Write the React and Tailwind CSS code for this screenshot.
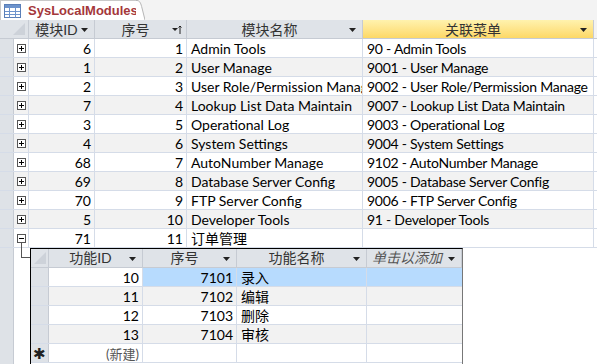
import React from 'react';

const FONT = { fontFamily: 'Lato, "Noto Sans CJK SC", sans-serif' };

const rows = [
  [6, 1, 'Admin Tools', '90 - Admin Tools'],
  [1, 2, 'User Manage', '9001 - User Manage'],
  [2, 3, 'User Role/Permission Manage', '9002 - User Role/Permission Manage'],
  [7, 4, 'Lookup List Data Maintain', '9007 - Lookup List Data Maintain'],
  [3, 5, 'Operational Log', '9003 - Operational Log'],
  [4, 6, 'System Settings', '9004 - System Settings'],
  [68, 7, 'AutoNumber Manage', '9102 - AutoNumber Manage'],
  [69, 8, 'Database Server Config', '9005 - Database Server Config'],
  [70, 9, 'FTP Server Config', '9006 - FTP Server Config'],
  [5, 10, 'Developer Tools', '91 - Developer Tools'],
  [71, 11, '订单管理', ''],
];

const subRows = [
  [10, 7101, '录入'],
  [11, 7102, '编辑'],
  [12, 7103, '删除'],
  [13, 7104, '审核'],
];

const Arrow = () => (
  <svg width="7" height="4" viewBox="0 0 7 4" className="absolute right-[6px] top-[8px]">
    <path d="M0 0h7L3.5 4z" fill="#222" />
  </svg>
);

const SortArrow = () => (
  <svg width="10" height="9" viewBox="0 0 10 9" className="absolute right-[4px] top-[5px]">
    <path d="M0 3h6L3 6z" fill="#222" />
    <path d="M8 9V1M6.5 2.5L8 1l1.5 1.5" stroke="#222" strokeWidth="1" fill="none" />
  </svg>
);

const PlusBox = ({ minus }) => (
  <div className="w-[9px] h-[9px] border border-[#555] bg-white relative">
    <div className="absolute left-[1px] right-[1px] top-[3px] h-px bg-black" />
    {!minus && <div className="absolute top-[1px] bottom-[1px] left-[3px] w-px bg-black" />}
  </div>
);

const TableIcon = () => (
  <svg width="17" height="14" viewBox="0 0 17 14" className="shrink-0">
    <rect x="0.5" y="0.5" width="16" height="13" fill="#fff" stroke="#5a7fb8" />
    <rect x="1" y="1" width="15" height="3" fill="#6d93cc" />
    <path d="M1 7.5h15M1 10.5h15M5.5 4v9.5M11.5 4v9.5" stroke="#6d93cc" strokeWidth="1" />
  </svg>
);

const Head = ({ w, children, arrow = true, sort, yellow, italic }) => (
  <div
    className={`relative h-full border-r border-[#c6cbd3] flex items-center text-[14px] ${
      yellow ? 'bg-gradient-to-b from-[#fff2ad] to-[#fdd865]' : ''
    } ${italic ? 'italic text-[#555] justify-start pl-[5px]' : 'justify-center pr-[10px] text-[#333]'} ${w}`}
  >
    <span>{children}</span>
    {sort ? <SortArrow /> : arrow && <Arrow />}
  </div>
);

export default function App() {
  return (
    <div className="w-[597px] h-[364px] overflow-hidden bg-white text-black" style={FONT}>
      {/* tab bar */}
      <div className="h-[20px] bg-[#f3f3f3] flex items-end">
        <div className="relative h-[20px] w-[136px] bg-white flex items-center pl-[3px] gap-[7px] border-t border-l border-[#c9c9c9]">
          <TableIcon />
          <span
            className="text-[13px] font-bold text-[#a4373a] leading-none whitespace-nowrap"
            style={{ fontFamily: '"Liberation Sans", Arial, sans-serif' }}
          >
            SysLocalModules
          </span>
          <svg width="9" height="20" viewBox="0 0 9 20" className="absolute right-[-9px] top-[-1px]">
            <path d="M0 0L1 0C4 0 5 4 6 8L9 20H0z" fill="#fff" />
            <path d="M0 0.5H1C4 0.5 5 4 6 8L9 20" stroke="#b5b5b5" fill="none" />
          </svg>
        </div>
      </div>

      {/* header */}
      <div className="h-[19px] flex bg-[#dfe3e8] border-b border-[#c6cbd3]">
        <div className="w-[29px] h-full border-r border-[#c6cbd3] relative">
          <svg width="12" height="12" viewBox="0 0 12 12" className="absolute right-[3px] bottom-[3px]">
            <path d="M12 0v12H0z" fill="#cdd2d9" />
          </svg>
        </div>
        <Head w="w-[66px]">模块ID</Head>
        <Head w="w-[92px]" sort>序号</Head>
        <Head w="w-[176px]">模块名称</Head>
        <Head w="w-[231px]" yellow>关联菜单</Head>
        <div className="flex-1 bg-[#f3f3f3]" />
      </div>

      {/* rows */}
      {rows.map((r, i) => (
        <div key={i} className={`h-[19px] flex border-b border-[#d5dce8] text-[14px] leading-[20px] ${i % 2 ? 'bg-[#f2f2f2]' : 'bg-white'}`}>
          <div className="w-[14px] h-full bg-[#dee2e7] border-r border-[#c6cbd3]" />
          <div className="w-[15px] h-full border-r border-[#d5dce8] relative flex items-center justify-center">
            <PlusBox minus={i === 10} />
            {i === 10 && <div className="absolute left-[7px] top-[14px] w-px h-[5px] bg-[#555]" />}
          </div>
          <div className="w-[66px] border-r border-[#d5dce8] text-right pr-[3px]">{r[0]}</div>
          <div className="w-[92px] border-r border-[#d5dce8] text-right pr-[3px]">{r[1]}</div>
          <div className="w-[176px] border-r border-[#d5dce8] pl-[4px] whitespace-nowrap overflow-hidden">{r[2]}</div>
          <div className="w-[231px] border-r border-[#d5dce8] pl-[4px] whitespace-nowrap overflow-hidden tracking-[-0.25px]">{r[3]}</div>
          <div className="flex-1 bg-white" />
        </div>
      ))}

      {/* expanded sub datasheet */}
      <div className="flex h-[200px]">
        <div className="w-[14px] h-full bg-[#dee2e7] border-r border-[#c6cbd3]" />
        <div className="w-[16px] relative">
          <div className="absolute left-[7px] top-0 w-px h-[9px] bg-[#555]" />
          <div className="absolute left-[7px] top-[9px] w-[9px] h-px bg-[#555]" />
        </div>
        <div className="w-[433px] border-l border-t border-black border-r border-r-[#777] text-[14px] leading-[20px]">
          <div className="h-[19px] flex bg-[#dfe3e8] border-b border-[#c6cbd3]">
            <div className="w-[18px] h-full border-r border-[#c6cbd3] relative">
              <svg width="12" height="12" viewBox="0 0 12 12" className="absolute right-[2px] bottom-[3px]">
                <path d="M12 0v12H0z" fill="#cdd2d9" />
              </svg>
            </div>
            <Head w="w-[94px]">功能ID</Head>
            <Head w="w-[94px]">序号</Head>
            <Head w="w-[130px]">功能名称</Head>
            <Head w="w-[95px]" italic>单击以添加</Head>
          </div>
          {[...subRows, null].map((r, i) => (
            <div key={i} className={`h-[19px] flex border-b border-[#d5dce8] ${i % 2 ? 'bg-[#f2f2f2]' : 'bg-white'}`}>
              <div className="w-[18px] h-full bg-[#dee2e7] border-r border-[#c6cbd3] flex items-center justify-center text-[15px] leading-none text-[#222]">
                {r ? '' : '✱'}
              </div>
              <div className="w-[94px] border-r border-[#d5dce8] text-right pr-[3px]">
                {r ? r[0] : <span className="text-[#555] text-[13px]">(新建)</span>}
              </div>
              <div className={`w-[94px] border-r border-[#d5dce8] text-right pr-[3px] ${i === 0 ? 'bg-[#b7dbfe]' : ''}`}>{r ? r[1] : ''}</div>
              <div className={`w-[130px] border-r border-[#d5dce8] pl-[4px] ${i === 0 ? 'bg-[#b7dbfe]' : ''}`}>{r ? r[2] : ''}</div>
              <div className={`w-[95px] ${i === 0 ? 'bg-[#b7dbfe]' : ''}`} />
            </div>
          ))}
        </div>
        <div className="flex-1 bg-white" />
      </div>
    </div>
  );
}
